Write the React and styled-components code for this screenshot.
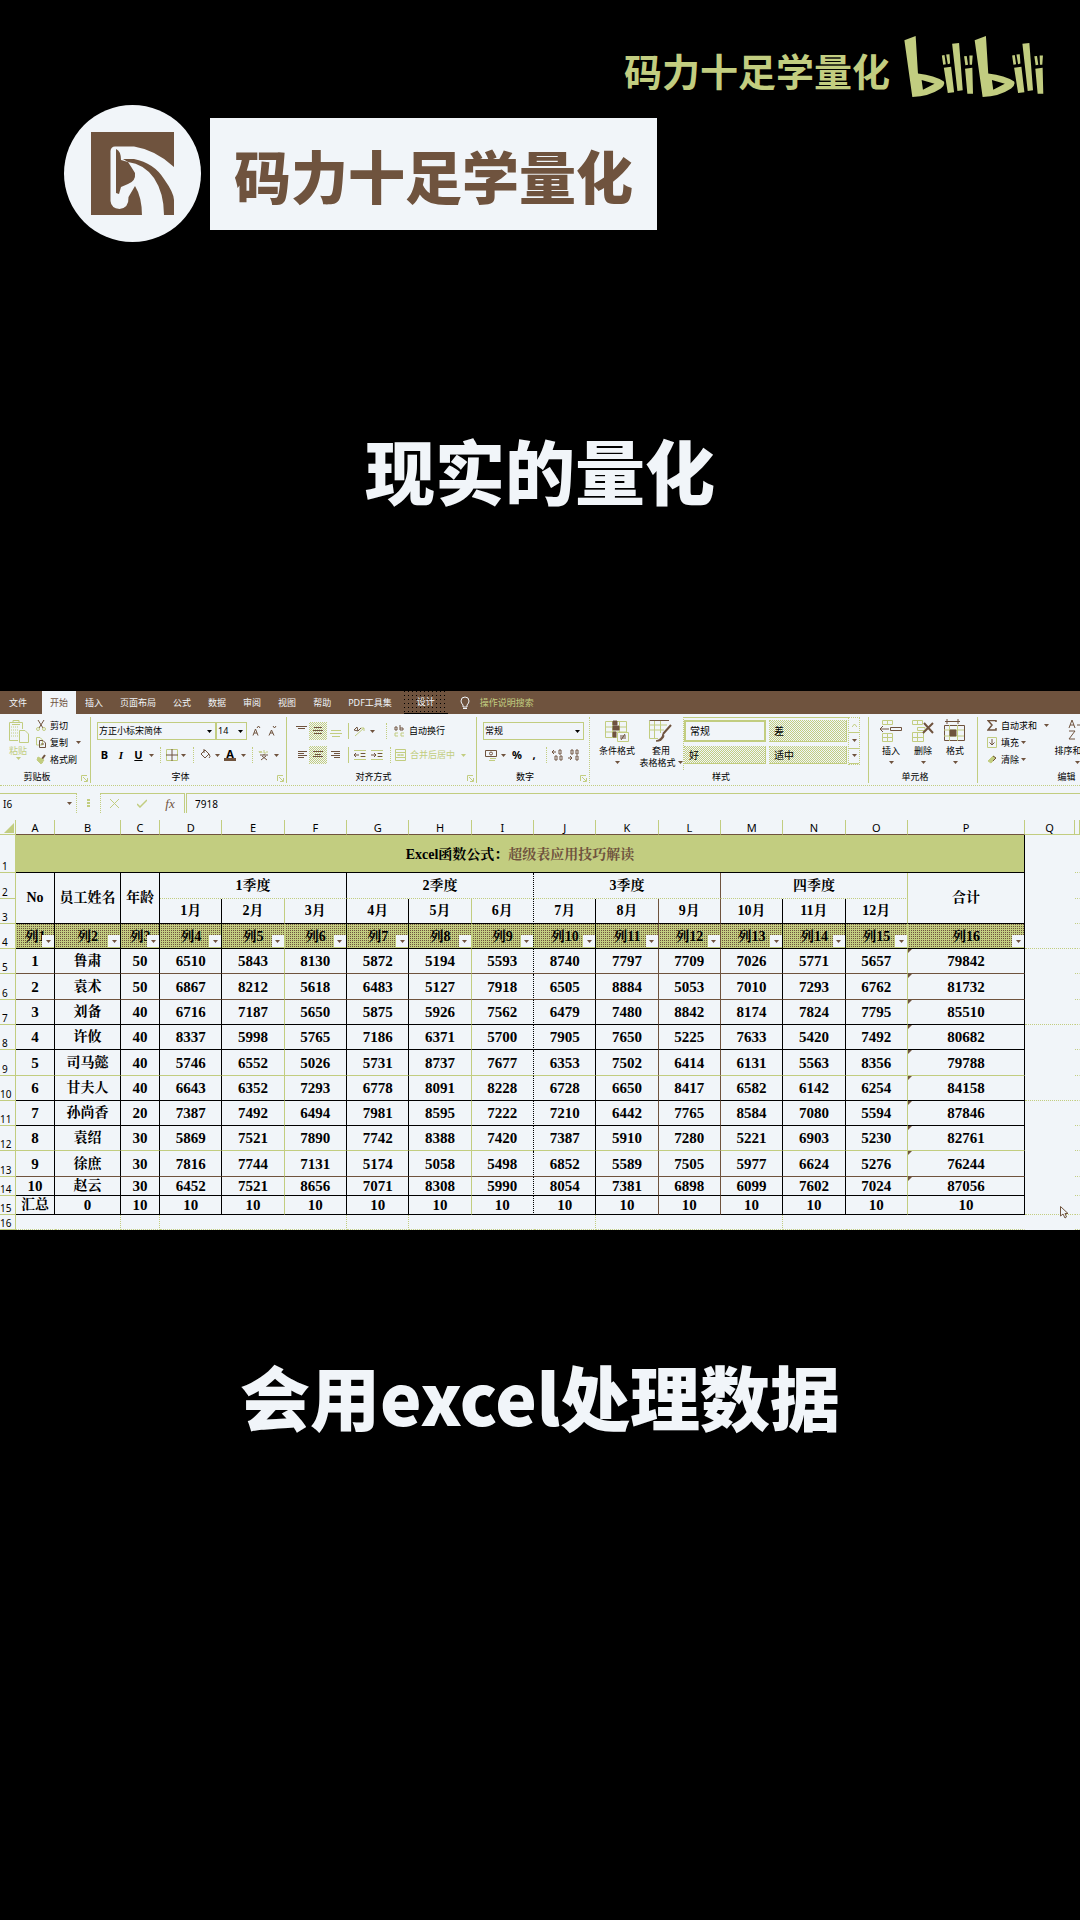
import React from "react";
import styled, { createGlobalStyle, css } from "styled-components";

const C = { brown: "#6f533e", green: "#c2cd80", paper: "#f1f5f9", ink: "#000000" };
const sans = '"Noto Sans", "Noto Sans CJK SC", sans-serif';
const serif = '"Liberation Serif", "Noto Serif CJK SC", "Noto Sans CJK SC", serif';
const checker = `repeating-conic-gradient(${C.green} 0 25%, ${C.paper} 0 50%) 0 0 / 2px 2px`;

const Global = createGlobalStyle`
  * { box-sizing: border-box; }
  body { margin: 0; background: ${C.ink}; }
  button, select, input { font: inherit; color: inherit; margin: 0; }
  svg { display: block; flex: none; }
`;

/* ---------- page ---------- */
const Page = styled.main`
  min-height: 100vh;
  display: flex;
  flex-direction: column;
  overflow: hidden;
  background: ${C.ink};
  font-family: "Noto Sans CJK SC", sans-serif;
`;
const Watermark = styled.header`
  display: flex;
  justify-content: flex-end;
  align-items: flex-start;
  gap: 14px;
  padding: 36px 36px 0;
  color: ${C.green};
  font-size: 38px;
  font-weight: 700;
  line-height: 67px;
`;
const Brand = styled.section`
  display: flex;
  align-items: center;
  gap: 9px;
  padding: 2px 64px 0;
`;
const BrandName = styled.h1`
  margin: 0;
  padding: 0 24px;
  background: ${C.paper};
  color: ${C.brown};
  font-size: 57px;
  line-height: 112px;
  font-weight: 900;
`;
const Caption = styled.p`
  margin: ${(p) => p.$top}px 0 0;
  text-align: center;
  color: ${C.paper};
  font-size: 70px;
  line-height: 80px;
  font-weight: 900;
`;
const Workbook = styled.section`
  position: relative;
  margin-top: 181px;
  background: ${C.paper};
  color: ${C.ink};
  font: 9px/12px ${sans};
`;

/* ---------- tabs ---------- */
const Tabs = styled.nav`
  display: flex;
  gap: 1px;
  height: 23px;
  padding-left: 1px;
  background: ${C.brown};
`;
const Tab = styled.button`
  border: 0;
  padding: 0 ${(p) => (p.$tool ? 13 : 8)}px;
  margin-right: ${(p) => (p.$file ? 6 : 0)}px;
  background: ${(p) => (p.$active ? C.paper : "transparent")};
  color: ${(p) => (p.$active ? C.brown : C.paper)};
  white-space: nowrap;
  ${(p) =>
    p.$tool &&
    css`
      margin-left: 3px;
      background: conic-gradient(at 1px 1px, transparent 75%, ${C.ink} 0) 0 0 / 4px 4px;
      border-bottom: 1px solid ${C.ink};
    `}
`;
const TellMe = styled.button`
  display: flex;
  align-items: center;
  gap: 9px;
  border: 0;
  padding: 0 10px;
  background: transparent;
  color: ${C.green};
`;

/* ---------- ribbon ---------- */
const Ribbon = styled.div`
  display: flex;
  height: 72px;
  padding-top: 3px;
  overflow: hidden;
  border-bottom: 1px dotted ${C.green};
`;
const GroupBox = styled.section`
  flex: none;
  width: ${(p) => p.$w}px;
  height: 66px;
  display: flex;
  flex-direction: column;
  border-right: 1px ${(p) => (p.$dotted ? "dotted" : "solid")} ${C.green};
`;
const GroupBody = styled.div`
  height: 54px;
  display: flex;
  padding-left: ${(p) => p.$pad}px;
  gap: ${(p) => p.$gap || 0}px;
`;
const GroupFoot = styled.footer`
  position: relative;
  text-align: center;
  padding: 1px 16px 0 0;
`;
const Launcher = styled.button`
  position: absolute;
  right: 2px;
  bottom: 1px;
  border: 0;
  padding: 0;
  background: none;
`;
const Stack = styled.div`
  display: flex;
  flex-direction: column;
  gap: ${(p) => p.$gap || 0}px;
  padding: ${(p) => p.$pad || 0}px 0 0;
`;
const Line = styled.div`
  display: flex;
  align-items: center;
  height: ${(p) => (p.$tight ? 17 : 18)}px;
  gap: ${(p) => p.$gap || 0}px;
`;
const Tool = styled.button`
  flex: none;
  display: flex;
  align-items: center;
  justify-content: ${(p) => (p.$left ? "flex-start" : "center")};
  gap: 4px;
  width: ${(p) => (p.$w ? p.$w + "px" : "auto")};
  height: 18px;
  border: 0;
  padding: 0;
  white-space: nowrap;
  background: ${(p) => (p.$on ? checker : "none")};
  color: ${(p) => (p.$off ? C.green : C.ink)};
`;
const Letter = styled.span`
  font-size: 11px;
  font-weight: 700;
  font-style: ${(p) => (p.$i ? "italic" : "normal")};
  font-family: ${(p) => (p.$i ? serif : sans)};
  text-decoration: ${(p) => (p.$u ? "underline" : "none")};
  border-bottom: ${(p) => (p.$bar ? `3px solid ${C.brown}` : "0")};
  padding: 0 ${(p) => (p.$bar ? 2 : 0)}px;
  line-height: ${(p) => (p.$bar ? 9 : 12)}px;
`;
const FunctionMark = styled.span`
  font: italic 400 13px/12px ${serif};
  color: ${C.brown};
`;
const BigTool = styled.button`
  flex: none;
  width: ${(p) => p.$w}px;
  display: flex;
  flex-direction: column;
  align-items: center;
  border: 0;
  padding: 2px 0 0;
  background: none;
  white-space: nowrap;
  color: ${(p) => (p.$off ? C.green : C.ink)};
  svg:first-child { margin-bottom: 2px; }
`;
const BigLabel = styled.span`
  display: flex;
  align-items: center;
  gap: 2px;
  height: 12px;
`;
const Rule = styled.i`
  flex: none;
  width: 1px;
  height: 16px;
  margin: 0 ${(p) => p.$m || 4}px;
  border-left: 1px ${(p) => (p.$dotted ? "dotted" : "solid")} ${C.green};
`;
const Picker = styled.label`
  display: grid;
  align-items: center;
  width: ${(p) => p.$w}px;
  height: 18px;
  border: 1px solid ${C.green};
  > * { grid-area: 1 / 1; }
  svg { justify-self: end; margin-right: 3px; pointer-events: none; }
`;
const Select = styled.select`
  appearance: none;
  width: 100%;
  height: 16px;
  border: 0;
  padding: 0 1px;
  background: none;
`;
const Gallery = styled.div`
  display: grid;
  grid-template-columns: 82px 78px;
  grid-template-rows: 22px 18px;
  gap: 4px 3px;
  padding: 2px 1px 0 0;
  border-top: 1px solid ${C.green};
  border-left: 1px dotted ${C.green};
`;
const Swatch = styled.button`
  border: ${(p) => (p.$sel ? `2px solid ${C.green}` : `1px dotted ${C.green}`)};
  background: ${(p) => (p.$fill ? checker : C.paper)};
  padding: 0 4px;
  font-size: 10px;
  text-align: left;
`;
const Scroller = styled.div`
  display: grid;
  grid-template-rows: repeat(3, 1fr);
  width: 12px;
  height: 48px;
  border: 1px dotted ${C.green};
`;
const ScrollButton = styled.button`
  display: grid;
  place-items: center;
  border: 0;
  border-bottom: 1px solid ${C.green};
  padding: 0;
  background: none;
`;

/* ---------- formula bar ---------- */
const FormulaBar = styled.div`
  display: flex;
  height: 27px;
  padding: 7px 0 0;
  font-size: 10px;
`;
const NameBox = styled.label`
  width: 77px;
  display: flex;
  align-items: center;
  padding: 0 4px 0 3px;
  border-top: 1px solid ${C.green};
  border-right: 1px dotted ${C.green};
`;
const Field = styled.input`
  flex: 1;
  min-width: 0;
  width: 100%;
  border: 0;
  padding: 0;
  background: none;
  outline: none;
`;
const Grip = styled.span`
  width: 23px;
  display: grid;
  place-items: center;
`;
const FormulaTools = styled.div`
  display: flex;
  align-items: center;
  width: 85px;
  border: 1px solid ${C.green};
  border-style: solid solid none dotted;
`;
const FormulaInput = styled.label`
  flex: 1;
  display: flex;
  align-items: center;
  margin-left: 1px;
  padding-left: 8px;
  border-top: 1px solid ${C.green};
  border-left: 1px solid ${C.green};
`;

/* ---------- sheet ---------- */
const Sheet = styled.table`
  width: 100%;
  margin-top: 7px;
  table-layout: fixed;
  border-collapse: separate;
  border-spacing: 0;
  font-family: ${serif};
  font-size: 14px;
  line-height: 14px;
`;
const Col = styled.col`
  width: ${(p) => (p.$w ? p.$w + "px" : "auto")};
`;
const Row = styled.tr`
  height: ${(p) => p.$h}px;
`;
const ColHead = styled.th`
  padding: 2px 0 0;
  border-right: 1px solid ${C.green};
  border-bottom: 1px solid ${(p) => (p.$out ? C.green : C.brown)};
  font: 400 11px/12px ${sans};
  svg { margin-left: 4px; }
`;
const RowHead = styled.th`
  padding: 0;
  border-right: 1px solid ${C.green};
  border-bottom: 1px solid ${C.green};
  vertical-align: bottom;
  font: 400 10px/11px ${sans};
  text-align: left;
  text-indent: ${(p) => (p.$two ? 0 : 2)}px;
`;
const Cell = styled.td`
  position: relative;
  padding: 0;
  text-align: center;
  vertical-align: middle;
  white-space: nowrap;
  overflow: hidden;
  font-weight: 700;
  font-size: ${(p) => (p.$num ? 15 : 14)}px;
  border-right: 1px ${(p) => p.$r || `solid ${C.ink}`};
  border-bottom: 1px ${(p) => p.$b || `solid ${C.ink}`};
  ${(p) => p.$title && css`background: ${C.green}; padding-top: 2px;`}
  ${(p) =>
    p.$band &&
    css`
      padding-top: 2px;
      background: conic-gradient(${C.brown} 25%, ${C.green} 0) 0 0 / 2px 2px;
    `}
  ${(p) =>
    p.$note &&
    css`
      &::before {
        content: "";
        position: absolute;
        left: 0;
        top: 0;
        border-top: 4px solid ${C.brown};
        border-right: 4px solid transparent;
      }
    `}
`;
const TitleTail = styled.span`
  color: ${C.brown};
`;
const Filter = styled.button`
  position: absolute;
  right: 0;
  bottom: 1px;
  width: 12px;
  height: 12px;
  display: grid;
  place-items: center;
  border: 0;
  padding: 0;
  background: ${C.paper};
`;
const Pointer = styled.svg`
  position: absolute;
  right: 11px;
  bottom: 11px;
`;

/* ---------- icons ---------- */
const Icon = ({ w = 12, h = 12, children, c = C.brown }) => (
  <svg width={w} height={h} viewBox={`0 0 ${w} ${h}`} fill="none" stroke={c} strokeWidth="1" aria-hidden="true">
    {children}
  </svg>
);
const Down = ({ c = C.brown }) => (
  <svg width="5" height="3" viewBox="0 0 5 3" aria-hidden="true"><path d="M0 0H5L2.5 3Z" fill={c} /></svg>
);
const Drop = ({ w = 9, label, c }) => (
  <Tool $w={w} aria-label={label}><Down c={c} /></Tool>
);
const Bars = ({ rows, w = 12, c }) => (
  <Icon w={w} c={c}>{rows.map(([y, a, b], i) => <path key={i} d={`M${a} ${y}.5H${b}`} />)}</Icon>
);

const BiliLetters = () => (
  <>
    <path fillRule="evenodd" d="M912 60 946 47 953 160Q1004 166 1031 184 1036 194 1022 205 986 229 936 231ZM964 180 968 209 1003 191Z" />
    <path d="M1031 143 1053 140 1062 217 1043 219ZM1025 106 1033 104 1037 132 1029 134ZM1038 103 1048 102 1050 130 1043 132ZM1056 70 1077 68 1088 211 1072 213ZM1095 146 1117 143 1119 221 1102 221ZM1092 108 1100 107 1104 134 1096 135ZM1108 106 1118 106 1116 134 1109 134Z" />
  </>
);
const BiliLogo = () => (
  <svg width="140" height="61" viewBox="912 47 420 184" fill={C.green} role="img" aria-label="bilibili">
    <BiliLetters />
    <g transform="translate(212 0)"><BiliLetters /></g>
  </svg>
);
const HorseLogo = () => (
  <svg width="137" height="137" viewBox="0 0 137 137" role="img" aria-label="logo">
    <circle cx="68.5" cy="68.5" r="68.5" fill={C.paper} />
    <path d="M27 27H110V110H27Z" fill={C.brown} />
    <path d="M46.500 46Q47 41.500 51 41.500H70Q92 45 110 62V111H78Q78 92 71 81L64.500 92Q65 103 55.500 104 47 103 46.500 96Z" fill={C.paper} />
    <path d="M59 54H70Q90 58 100 74 110 88 110 95V110H100Q100 88 90 73 80 59 64 57Z" fill={C.brown} />
    <path d="M52 44Q57 46 57 55L64 57Q68 63 71 68 72 76 64 79L57 82 55 89 52 88Z" fill={C.brown} />
  </svg>
);

/* ---------- ribbon parts ---------- */
const Group = ({ w, label, pad, gap, dotted, launcher, children }) => (
  <GroupBox $w={w} $dotted={dotted}>
    <GroupBody $pad={pad} $gap={gap}>{children}</GroupBody>
    <GroupFoot>
      {label}
      {launcher && (
        <Launcher aria-label={label + "设置"}>
          <Icon w={7} h={7} c={C.green}><path d="M.5 6V.5H6M2 2 6 6M6.500 3V6.500H3" /></Icon>
        </Launcher>
      )}
    </GroupFoot>
  </GroupBox>
);
const Choice = ({ w, label, value }) => (
  <Picker $w={w}>
    <Select aria-label={label} defaultValue={value}><option>{value}</option></Select>
    <Down c={C.ink} />
  </Picker>
);

const Clipboard = () => (
  <Group w={91} label="剪贴板" pad={6} gap={6} launcher>
    <BigTool $w={24} $off>
      <Icon w={22} h={24} c={C.green}>
        <path d="M2.500 3.500H15.500V10M2.500 3.500V21.500H11M6 3V1.500H12V3M5 5.500H13" />
        <path d="M4 8H11M4 11H11M4 14H11M4 17H11" strokeDasharray="1 1" />
        <path d="M12.500 11.500H18L21.500 15V23.500H12.500Z" />
      </Icon>
      <BigLabel>粘贴</BigLabel>
      <Down c={C.green} />
    </BigTool>
    <Stack>
      <Line $tight><Tool $left><Icon w={10} h={11}><path d="M2 0 7 8M8 0 3 8" /><circle cx="2" cy="9" r="1.500" stroke={C.green} /><circle cx="8" cy="9" r="1.500" stroke={C.green} /></Icon>剪切</Tool></Line>
      <Line $tight $gap={6}><Tool $left><Icon w={10} h={11}><path d="M.5.500H4L6.500 3V8H.5Z" stroke={C.green} /><path d="M3.500 3.500H7L9.500 6V10.500H3.500Z" /><path d="M5 7H8" /></Icon>复制</Tool><Drop label="复制选项" /></Line>
      <Line $tight><Tool $left><Icon w={10} h={11}><path d="M9 1 6 5" strokeWidth="2" /><path d="M1 4 7 9M2 3 8 6 5 10 1 6Z" stroke={C.green} fill={C.green} /></Icon>格式刷</Tool></Line>
    </Stack>
  </Group>
);

const FontGroup = () => (
  <Group w={196} label="字体" pad={6} launcher>
    <Stack $pad={5} $gap={6}>
      <Line>
        <Choice w={119} label="字体" value="方正小标宋简体" />
        <Choice w={31} label="字号" value="14" />
        <Tool $w={18} aria-label="增大字号"><Icon w={9} h={10}><path d="M1 9.500 3.500 3 6 9.500M2 7H5" /><path d="M5 2 6.500 0 8 2" /></Icon></Tool>
        <Tool $w={14} aria-label="减小字号"><Icon w={9} h={10}><path d="M1 9.500 3.500 4 6 9.500M2 7H5" /><path d="M5 0 6.500 2 8 0" /></Icon></Tool>
      </Line>
      <Line>
        <Tool $w={15}><Letter>B</Letter></Tool>
        <Tool $w={18}><Letter $i>I</Letter></Tool>
        <Tool $w={17}><Letter $u>U</Letter></Tool>
        <Drop label="下划线选项" />
        <Rule $dotted />
        <Tool $w={13} aria-label="边框"><Icon><path d="M.5.500H11.500V11.500H.5Z" stroke={C.green} /><path d="M6 0V12M0 6H12" /></Icon></Tool>
        <Drop w={11} label="边框选项" />
        <Rule $dotted />
        <Tool $w={14} aria-label="填充颜色"><Icon><path d="M2 5 6 1 10 5 6 9ZM5 0V4M10 5Q12 8 10 9" /></Icon></Tool>
        <Drop w={10} label="填充颜色选项" />
        <Tool $w={16}><Letter $bar>A</Letter></Tool>
        <Drop w={10} label="字体颜色选项" />
        <Rule $dotted />
        <Tool $w={14} aria-label="拼音"><Icon><path d="M1 2 2 4 3 2 4 4M6 1V4H8M9 2V4" stroke={C.green} /><path d="M2 6H10M6 5V6M4 7 9 11M8 7 3 11" /></Icon></Tool>
        <Drop w={10} label="拼音选项" />
      </Line>
    </Stack>
  </Group>
);

const AlignGroup = () => (
  <Group w={190} label="对齐方式" pad={7} launcher>
    <Stack $pad={5} $gap={6}>
      <Line>
        <Tool $w={15} aria-label="顶端对齐"><Bars rows={[[1, 0, 11], [3, 2, 9]]} /></Tool>
        <Tool $w={18} $on aria-label="垂直居中"><Bars rows={[[2, 2, 10], [5, 1, 11], [8, 2, 10]]} /></Tool>
        <Tool $w={18} aria-label="底端对齐"><Bars c={C.green} rows={[[5, 1, 11], [8, 0, 12], [11, 2, 10]]} /></Tool>
        <Rule $m={3} />
        <Tool $w={14} aria-label="方向"><Icon><path d="M1 5 4 2 5 6ZM5 6 8 3" /><path d="M2 11 11 3M8 3H11V6" stroke={C.green} /></Icon></Tool>
        <Drop w={13} label="方向选项" />
        <Rule $dotted $m={7} />
        <Tool $left><Icon w={11}><path d="M1 2H3V5H1ZM6 0V5H9V3H6" /><path d="M1 8H4M1 8V11H4M7 8H10M7 8V11H10" stroke={C.green} /></Icon>自动换行</Tool>
      </Line>
      <Line>
        <Tool $w={15} aria-label="左对齐"><Bars rows={[[2, 2, 11], [4, 2, 8], [6, 2, 11], [8, 2, 8]]} /></Tool>
        <Tool $w={18} $on aria-label="居中"><Bars rows={[[2, 1, 11], [5, 3, 9], [7, 1, 11]]} /></Tool>
        <Tool $w={18} aria-label="右对齐"><Bars rows={[[2, 1, 10], [4, 4, 10], [6, 1, 10], [8, 4, 10]]} /></Tool>
        <Rule $m={3} />
        <Tool $w={16} aria-label="减少缩进"><Icon><path d="M0 1.500H12M6 4.500H12M6 7.500H12M0 10.500H12" stroke={C.green} /><path d="M0 6H5M2 4 0 6 2 8M7 4.500H11M7 7.500H11" /></Icon></Tool>
        <Tool $w={18} aria-label="增加缩进"><Icon><path d="M0 1.500H12M6 4.500H12M6 7.500H12M0 10.500H12" stroke={C.green} /><path d="M0 6H5M3 4 5 6 3 8M7 4.500H11M7 7.500H11" /></Icon></Tool>
        <Rule $dotted $m={4} />
        <Tool $left $off><Icon w={11} c={C.green}><path d="M.5.500H10.500V11.500H.5ZM0 3.500H11M0 8.500H11M2 6H9M4 5V7M7 5V7" /></Icon>合并后居中</Tool>
        <Drop w={16} label="合并选项" c={C.green} />
      </Line>
    </Stack>
  </Group>
);

const NumberGroup = () => (
  <Group w={113} label="数字" pad={6} dotted launcher>
    <Stack $pad={5} $gap={6}>
      <Line><Choice w={101} label="数字格式" value="常规" /></Line>
      <Line>
        <Tool $w={16} aria-label="会计格式"><Icon><path d="M.5 1.500H11.500V7.500H.5Z" /><circle cx="6" cy="4.500" r="1.500" /><path d="M5 9.500H11M4 11.500H10" stroke={C.green} /></Icon></Tool>
        <Drop w={9} label="会计格式选项" />
        <Tool $w={18}><Letter>%</Letter></Tool>
        <Tool $w={16}><Letter>,</Letter></Tool>
        <Rule $dotted $m={4} />
        <Tool $w={14} aria-label="增加小数位数"><Icon><path d="M0 3H4M2 1 0 3 2 5M7 1H9V5H7Z" /><path d="M3 7H5V11H3ZM8 7H10V11H8Z" /></Icon></Tool>
        <Tool $w={18} aria-label="减少小数位数"><Icon><path d="M3 1H5V5H3ZM8 1H10V5H8Z" /><path d="M0 9H4M2 7 4 9 2 11M8 7H10V11H8Z" /></Icon></Tool>
      </Line>
    </Stack>
  </Group>
);

const StyleGroup = () => (
  <Group w={279} label="样式" pad={5}>
    <BigTool $w={44}>
      <Icon w={24} h={24}>
        <path d="M.5 2.500H21.500V18.500H.5ZM0 8H21M0 13H21M7.500 2V19M14.500 2V19" stroke={C.green} />
        <path d="M8 2H12V6H8ZM8 7H14V11H8ZM8 13H11V18H8Z" fill={C.brown} />
        <path d="M12.500 13.500H23.500V22.500H12.500Z" fill={C.paper} stroke={C.green} />
        <path d="M15 17H21M15 19H21M20 15 16 21" />
      </Icon>
      <BigLabel>条件格式</BigLabel>
      <BigLabel><Down /></BigLabel>
    </BigTool>
    <BigTool $w={44}>
      <Icon w={24} h={24}>
        <path d="M.5 1.500H20" /><path d="M.5 2V19.500H9M0 6H18M0 11H15M5.500 2V19M11.500 2V14" stroke={C.green} />
        <path d="M22 6 14 15" strokeWidth="2" /><path d="M14 15Q13 20 7 22 13 23 15 17Z" fill={C.brown} />
      </Icon>
      <BigLabel>套用</BigLabel>
      <BigLabel>表格格式<Down /></BigLabel>
    </BigTool>
    <Gallery>
      <Swatch $sel>常规</Swatch>
      <Swatch $fill>差</Swatch>
      <Swatch $fill>好</Swatch>
      <Swatch $fill>适中</Swatch>
    </Gallery>
    <Scroller>
      <ScrollButton aria-label="向上"><Icon w={5} h={3} c={C.green}><path d="M0 3 2.500 0 5 3" /></Icon></ScrollButton>
      <ScrollButton aria-label="向下"><Down /></ScrollButton>
      <ScrollButton aria-label="更多样式"><Down /></ScrollButton>
    </Scroller>
  </Group>
);

const CellGroup = () => (
  <Group w={109} label="单元格" pad={6}>
    <BigTool $w={32}>
      <Icon w={22} h={24}>
        <path d="M2.500 1.500H12.500V5.500H2.500ZM7.500 1V6M2.500 14.500H12.500V22.500H2.500ZM7.500 14V23M2 18.500H13" stroke={C.green} />
        <path d="M0 10H9M3 7 0 10 3 13M10.500 8.500H21.500V11.500H10.500Z" />
      </Icon>
      <BigLabel>插入</BigLabel><BigLabel><Down /></BigLabel>
    </BigTool>
    <BigTool $w={32}>
      <Icon w={22} h={24}>
        <path d="M.5 1.500H10.500V5.500H.5ZM5.500 1V6M.5 13.500H11.500V22.500H.5ZM5.500 14V23M0 18.500H12M5.500 8.500H13V11.500H5.500Z" stroke={C.green} />
        <path d="M12 4 21 14M21 4 11 14" strokeWidth="2" />
      </Icon>
      <BigLabel>删除</BigLabel><BigLabel><Down /></BigLabel>
    </BigTool>
    <BigTool $w={32}>
      <Icon w={22} h={24}>
        <path d="M1 2.500H16M3 0V5M14 0V5M.5 6.500H20.500V21.500H.5Z" />
        <path d="M0 11H20M0 17H20M5.500 6V22M13.500 6V22" stroke={C.green} />
        <path d="M6 11H12V17H6Z" fill={C.brown} />
      </Icon>
      <BigLabel>格式</BigLabel><BigLabel><Down /></BigLabel>
    </BigTool>
  </Group>
);

const EditGroup = () => (
  <Group w={194} label="编辑" pad={9} gap={1}>
    <Stack>
      <Line $tight $gap={5}><Tool $left><Icon w={10} h={11}><path d="M9 2V.5H1L5 5 1 10H9V8" strokeWidth="1.500" /></Icon>自动求和</Tool><Drop label="求和选项" /></Line>
      <Line $tight><Tool $left><Icon w={10} h={11}><path d="M.5.500H9.500V10.500H.5Z" stroke={C.green} /><path d="M5 2V8M2.500 5.500 5 8 7.500 5.500" /></Icon>填充</Tool><Drop label="填充选项" /></Line>
      <Line $tight><Tool $left><Icon w={10} h={11}><path d="M1 7 6 2 9 4 4 9Z" stroke={C.green} fill={C.green} /><path d="M6 2 9 4 6 7" /></Icon>清除</Tool><Drop label="清除选项" /></Line>
    </Stack>
    <BigTool $w={50}>
      <Icon w={24} h={24}><path d="M4 9 7 1 10 9M5 6H9M4 12H10L4 20H10" /><path d="M12 6H20L16 10V16" /></Icon>
      <BigLabel>排序和筛选</BigLabel><BigLabel><Down /></BigLabel>
    </BigTool>
  </Group>
);

/* ---------- data ---------- */
const solid = (c) => `solid ${c}`;
const dotted = (c) => `dotted ${c}`;
const cols = "ABCDEFGHIJKLMNOP".split("");
const right = {
  E: solid(C.green), H: solid(C.green), I: dotted(C.ink), K: solid(C.brown), L: solid(C.brown), O: solid(C.green),
};
const rows = [
  [25, C.brown, "1 鲁肃 50 6510 5843 8130 5872 5194 5593 8740 7797 7709 7026 5771 5657 79842"],
  [26, C.brown, "2 袁术 50 6867 8212 5618 6483 5127 7918 6505 8884 5053 7010 7293 6762 81732"],
  [25, C.ink, "3 刘备 40 6716 7187 5650 5875 5926 7562 6479 7480 8842 8174 7824 7795 85510"],
  [25, C.ink, "4 许攸 40 8337 5998 5765 7186 6371 5700 7905 7650 5225 7633 5420 7492 80682"],
  [26, C.green, "5 司马懿 40 5746 6552 5026 5731 8737 7677 6353 7502 6414 6131 5563 8356 79788"],
  [25, C.ink, "6 甘夫人 40 6643 6352 7293 6778 8091 8228 6728 6650 8417 6582 6142 6254 84158"],
  [25, C.ink, "7 孙尚香 20 7387 7492 6494 7981 8595 7222 7210 6442 7765 8584 7080 5594 87846"],
  [25, C.green, "8 袁绍 30 5869 7521 7890 7742 8388 7420 7387 5910 7280 5221 6903 5230 82761"],
  [26, C.brown, "9 徐庶 30 7816 7744 7131 5174 5058 5498 6852 5589 7505 5977 6624 5276 76244"],
  [19, C.ink, "10 赵云 30 6452 7521 8656 7071 8308 5990 8054 7381 6898 6099 7602 7024 87056"],
  [19, C.ink, "汇总 0 10 10 10 10 10 10 10 10 10 10 10 10 10 10"],
];
const none = "solid transparent";
const lined = [4, 7, 10, 15];

const Outside = ({ n }) => (
  <>
    <Cell $r={none} $b={lined.includes(n) ? dotted(C.green) : none} />
    <Cell $r={none} $b={dotted(C.green)} />
  </>
);

const SheetTable = () => (
  <Sheet>
    <colgroup>
      <Col $w={16} /><Col $w={39} /><Col $w={66} /><Col $w={39} />
      {cols.slice(3, 15).map((c) => <Col key={c} />)}
      <Col $w={117} /><Col $w={50} /><Col $w={5} />
    </colgroup>
    <thead>
      <Row $h={15}>
        <ColHead $out aria-label="全选"><Icon w={10} h={10} c="none"><path d="M10 0V10H0Z" fill={C.green} /></Icon></ColHead>
        {cols.map((c) => <ColHead key={c}>{c}</ColHead>)}
        <ColHead $out>Q</ColHead><ColHead $out aria-label="R" />
      </Row>
    </thead>
    <tbody>
      <Row $h={38}>
        <RowHead>1</RowHead>
        <Cell colSpan={16} $title>Excel函数公式：<TitleTail>超级表应用技巧解读</TitleTail></Cell>
        <Outside n={1} />
      </Row>
      <Row $h={26}>
        <RowHead>2</RowHead>
        <Cell rowSpan={2}>No</Cell><Cell rowSpan={2}>员工姓名</Cell><Cell rowSpan={2}>年龄</Cell>
        <Cell colSpan={3} $b={dotted(C.green)}>1季度</Cell>
        <Cell colSpan={3} $b={dotted(C.green)} $r={right.I}>2季度</Cell>
        <Cell colSpan={3} $b={dotted(C.green)} $r={right.L}>3季度</Cell>
        <Cell colSpan={3} $b={dotted(C.green)} $r={right.O}>四季度</Cell>
        <Cell rowSpan={2}>合计</Cell>
        <Outside n={2} />
      </Row>
      <Row $h={25}>
        <RowHead>3</RowHead>
        {cols.slice(3, 15).map((c, i) => <Cell key={c} $r={right[c]}>{i + 1}月</Cell>)}
        <Outside n={3} />
      </Row>
      <Row $h={25}>
        <RowHead>4</RowHead>
        {cols.map((c, i) => (
          <Cell key={c} $band $r={right[c]}>列{i + 1}<Filter aria-label={`筛选列${i + 1}`}><Down /></Filter></Cell>
        ))}
        <Outside n={4} />
      </Row>
      {rows.map(([h, line, text], r) => (
        <Row $h={h} key={r}>
          <RowHead $two={r > 4}>{r + 5}</RowHead>
          {text.split(" ").map((v, i) => (
            <Cell key={i} $num={r === 10 ? i > 0 : i !== 1} $r={right[cols[i]]} $b={solid(line)} $note={i === 15 && r < 10}>{v}</Cell>
          ))}
          <Outside n={r + 5} />
        </Row>
      ))}
      <Row $h={15}>
        <RowHead $two>16</RowHead>
        {cols.map((c) => <Cell key={c} $r={"BCFGJM".includes(c) ? dotted(C.green) : none} $b={dotted(C.green)} />)}
        <Outside n={16} />
      </Row>
    </tbody>
  </Sheet>
);

export default function App() {
  return (
    <Page lang="zh-CN">
      <Global />
      <Watermark><span>码力十足学量化</span><BiliLogo /></Watermark>
      <Brand><HorseLogo /><BrandName>码力十足学量化</BrandName></Brand>
      <Caption $top={188}>现实的量化</Caption>
      <Workbook>
        <Tabs>
          <Tab $file>文件</Tab>
          <Tab $active>开始</Tab>
          {["插入", "页面布局", "公式", "数据", "审阅", "视图", "帮助", "PDF工具集"].map((t) => <Tab key={t}>{t}</Tab>)}
          <Tab $tool>设计</Tab>
          <TellMe>
            <Icon w={12} h={14} c={C.paper}><path d="M4 9Q2 7 2 5 2 1 6 1 10 1 10 5 10 7 8 9V11H4ZM4 12.500H8" /></Icon>
            操作说明搜索
          </TellMe>
        </Tabs>
        <Ribbon>
          <Clipboard /><FontGroup /><AlignGroup /><NumberGroup /><StyleGroup /><CellGroup /><EditGroup />
        </Ribbon>
        <FormulaBar>
          <NameBox><Field aria-label="名称框" defaultValue="I6" /><Down /></NameBox>
          <Grip><Icon w={3} h={9} c={C.green}><path d="M1.500 0V9" strokeWidth="3" strokeDasharray="2 1" /></Icon></Grip>
          <FormulaTools>
            <Tool $w={27} aria-label="取消"><Icon w={9} h={9} c={C.green}><path d="M0 0 9 9M9 0 0 9" /></Icon></Tool>
            <Tool $w={28} aria-label="输入"><Icon w={10} h={9} c={C.green}><path d="M0 5 3 8 10 1" strokeWidth="1.500" /></Icon></Tool>
            <Tool $w={28} aria-label="插入函数"><FunctionMark>fx</FunctionMark></Tool>
          </FormulaTools>
          <FormulaInput><Field aria-label="编辑栏" defaultValue="7918" /></FormulaInput>
        </FormulaBar>
        <SheetTable />
        <Pointer width="9" height="13" viewBox="0 0 9 13" aria-hidden="true">
          <path d="M.5.500V10L3 8 5 12 6.500 11 5 7.500H8Z" fill={C.paper} stroke={C.brown} />
        </Pointer>
      </Workbook>
      <Caption $top={126}>会用excel处理数据</Caption>
    </Page>
  );
}
